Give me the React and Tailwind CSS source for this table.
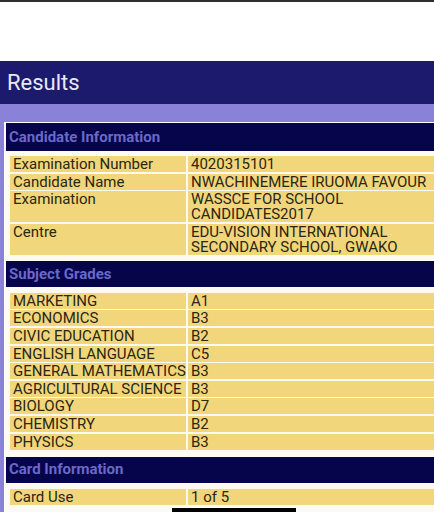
const candidate = [
  ["Examination Number", "4020315101"],
  ["Candidate Name", "NWACHINEMERE IRUOMA FAVOUR"],
  ["Examination", "WASSCE FOR SCHOOL\nCANDIDATES2017"],
  ["Centre", "EDU-VISION INTERNATIONAL\nSECONDARY SCHOOL, GWAKO"],
];

const grades = [
  ["MARKETING", "A1"],
  ["ECONOMICS", "B3"],
  ["CIVIC EDUCATION", "B2"],
  ["ENGLISH LANGUAGE", "C5"],
  ["GENERAL MATHEMATICS", "B3"],
  ["AGRICULTURAL SCIENCE", "B3"],
  ["BIOLOGY", "D7"],
  ["CHEMISTRY", "B2"],
  ["PHYSICS", "B3"],
];

const card = [["Card Use", "1 of 5"]];

function SectionHeader({ title, className = "" }) {
  return (
    <div
      className={`bg-[#06054b] flex items-center pl-[3px] text-[15px] font-bold text-[#6a68c8] ${className}`}
    >
      {title}
    </div>
  );
}

function Rows({ rows, className = "" }) {
  return (
    <div className={`grid grid-cols-[176px_1fr] gap-x-[2px] gap-y-[1.6px] ml-[4px] ${className}`}>
      {rows.map(([label, value]) => (
        <div key={label} className="contents">
          <div className="bg-[#f2d67c] px-[3px] pt-[1px] leading-[15px] whitespace-nowrap">
            {label}
          </div>
          <div className="bg-[#f2d67c] px-[3px] pt-[1px] leading-[15px] whitespace-pre-line">
            {value}
          </div>
        </div>
      ))}
    </div>
  );
}

export default function App() {
  return (
    <div
      className="relative h-[512px] w-[434px] overflow-hidden bg-white text-[15px] text-[#2b2611]"
      style={{ fontFamily: "Roboto, 'Noto Sans', sans-serif" }}
    >
      <div className="h-[2px] bg-[#2e2e2e]" />
      <div className="h-[59px] bg-white" />
      <div className="h-[43px] bg-[#1b1a6d] flex items-center pl-[7px] text-[22px] text-[#e9e8f6]">
        Results
      </div>
      <div className="bg-[#8a82d8] pt-[18px] pl-[4px] h-full">
        <div className="bg-[#fdfbf1] border-l border-t border-white pl-[1px] pb-[10px]">
          <SectionHeader title="Candidate Information" className="h-[28px]" />
          <Rows rows={candidate} className="mt-[5px]" />
          <SectionHeader title="Subject Grades" className="h-[26px] mt-[6px]" />
          <Rows rows={grades} className="mt-[6px]" />
          <SectionHeader title="Card Information" className="h-[26px] mt-[7px]" />
          <Rows rows={card} className="mt-[6px]" />
        </div>
      </div>
      <div className="absolute bottom-0 left-[172px] w-[124px] h-[4px] bg-black" />
    </div>
  );
}
